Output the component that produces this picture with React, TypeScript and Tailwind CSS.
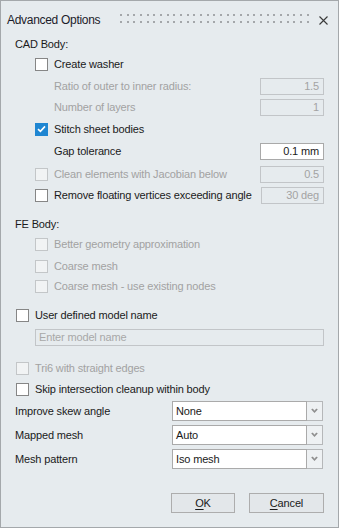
import React from "react";

type CS = "off" | "on" | "dis";

function Check({ state }: { state: CS }) {
  if (state === "on") {
    return (
      <div className="w-[13px] h-[13px] shrink-0 bg-[#1f86d2] border border-[#1f86d2] flex items-center justify-center">
        <svg width="9" height="8" viewBox="0 0 9 8">
          <path d="M1 4.2 L3.4 6.4 L8 1.4" fill="none" stroke="#ffffff" strokeWidth="1.6" />
        </svg>
      </div>
    );
  }
  if (state === "dis") {
    return <div className="w-[13px] h-[13px] shrink-0 bg-[#f1f3f4] border border-[#c3c6c8]" />;
  }
  return <div className="w-[13px] h-[13px] shrink-0 bg-white border border-[#868686]" />;
}

function NumBox({ value, enabled, w }: { value: string; enabled?: boolean; w?: string }) {
  return (
    <div
      className={
        "ml-auto h-[17px] flex items-center justify-end pr-[4px] border " +
        (w ?? "w-[64px]") +
        " " +
        (enabled
          ? "bg-white border-[#a9a9a9] text-[#1a1a1a]"
          : "bg-[#e6ebee] border-[#c2c5c8] text-[#a3a3a3]")
      }
    >
      {value}
    </div>
  );
}

function Dropdown({ value }: { value: string }) {
  return (
    <div className="flex h-[20px]">
      <div className="w-[135px] h-[20px] bg-white border border-[#aaaaaa] flex items-center pl-[3px] text-[#1a1a1a]">
        {value}
      </div>
      <div className="w-[16px] h-[20px] bg-[#eef1f3] border border-l-0 border-[#b5b7b9] flex items-center justify-center">
        <svg width="7" height="6" viewBox="0 0 7 6">
          <path d="M0.8 1 L3.5 3.8 L6.2 1" fill="none" stroke="#8d8d8d" strokeWidth="1.5" />
          <path d="M2 1.2 L3.5 2.6 L5 1.2" fill="none" stroke="#b0b0b0" strokeWidth="0.8" />
        </svg>
      </div>
    </div>
  );
}

export default function App() {
  const dots: React.ReactNode[] = [];
  for (let i = 0; i < 29; i++) {
    const x = Math.round(i * 6.67);
    dots.push(<rect key={"a" + i} x={x} y={4} width={2} height={2} fill="#a4a7aa" />);
    dots.push(<rect key={"b" + i} x={x} y={11} width={2} height={2} fill="#a4a7aa" />);
  }
  const dis = "text-[#a2a2a2]";
  return (
    <div
      className="w-[339px] h-[528px] bg-[#e6ebee] border border-[#a4a8ab] flex flex-col text-[11px] tracking-[-0.15px] text-[#1a1a1a] overflow-hidden"
      style={{ fontFamily: '"Liberation Sans", Arial, sans-serif' }}
    >
      {/* Title */}
      <div className="flex items-center h-[20px] mt-[9px] pl-[6px] pr-[10px]">
        <div className="w-[113px] text-[12px] tracking-[-0.3px] text-[#1c1c2a]">Advanced Options</div>
        <svg width="190" height="20" viewBox="0 0 190 20">
          {dots}
        </svg>
        <svg className="ml-auto" width="9" height="9" viewBox="0 0 9 9">
          <path d="M0.5 0.5 L8.5 8.5 M8.5 0.5 L0.5 8.5" stroke="#3a3a3a" strokeWidth="1.1" />
        </svg>
      </div>

      {/* CAD Body */}
      <div className="flex items-center h-[20px] mt-[4px] pl-[14px]">CAD Body:</div>
      <div className="flex items-center h-[20px] mt-0 pl-[34px] gap-[6px]">
        <Check state="off" />
        <span>Create washer</span>
      </div>
      <div className={"flex items-center h-[20px] mt-[2px] pl-[53px] pr-[14px] " + dis}>
        <span>Ratio of outer to inner radius:</span>
        <NumBox value="1.5" />
      </div>
      <div className={"flex items-center h-[20px] mt-[1px] pl-[53px] pr-[14px] " + dis}>
        <span>Number of layers</span>
        <NumBox value="1" />
      </div>
      <div className="flex items-center h-[20px] mt-[2px] pl-[34px] gap-[6px]">
        <Check state="on" />
        <span>Stitch sheet bodies</span>
      </div>
      <div className="flex items-center h-[20px] mt-[2px] pl-[53px] pr-[14px]">
        <span>Gap tolerance</span>
        <NumBox value="0.1 mm" enabled />
      </div>
      <div className="flex items-center h-[20px] mt-[3px] pl-[34px] pr-[14px]">
        <Check state="dis" />
        <span className={"ml-[6px] " + dis}>Clean elements with Jacobian below</span>
        <NumBox value="0.5" />
      </div>
      <div className="flex items-center h-[20px] mt-[1px] pl-[34px] pr-[14px]">
        <Check state="off" />
        <span className="ml-[6px]">Remove floating vertices exceeding angle</span>
        <NumBox value="30 deg" w="w-[63px]" />
      </div>

      {/* FE Body */}
      <div className="flex items-center h-[20px] mt-[9px] pl-[14px]">FE Body:</div>
      <div className="flex items-center h-[20px] mt-0 pl-[34px] gap-[6px]">
        <Check state="dis" />
        <span className={dis}>Better geometry approximation</span>
      </div>
      <div className="flex items-center h-[20px] mt-[2px] pl-[34px] gap-[6px]">
        <Check state="dis" />
        <span className={dis}>Coarse mesh</span>
      </div>
      <div className="flex items-center h-[20px] mt-0 pl-[34px] gap-[6px]">
        <Check state="dis" />
        <span className={dis}>Coarse mesh - use existing nodes</span>
      </div>

      {/* User defined */}
      <div className="flex items-center h-[20px] mt-[9px] pl-[15px] gap-[6px]">
        <Check state="off" />
        <span>User defined model name</span>
      </div>
      <div className="flex items-center h-[20px] mt-[2px] pl-[34px] pr-[14px]">
        <div className="w-full h-[17px] border border-[#c2c5c8] bg-[#e6ebee] flex items-center pl-[3px] text-[#a8a8a8]">
          Enter model name
        </div>
      </div>

      <div className="flex items-center h-[20px] mt-[11px] pl-[15px] gap-[6px]">
        <Check state="dis" />
        <span className={dis}>Tri6 with straight edges</span>
      </div>
      <div className="flex items-center h-[20px] mt-[1px] pl-[15px] gap-[6px]">
        <Check state="off" />
        <span>Skip intersection cleanup within body</span>
      </div>

      {/* Dropdowns */}
      <div className="flex items-center h-[20px] mt-[2px] pl-[14px]">
        <span className="w-[157px]">Improve skew angle</span>
        <Dropdown value="None" />
      </div>
      <div className="flex items-center h-[20px] mt-[4px] pl-[14px]">
        <span className="w-[157px]">Mapped mesh</span>
        <Dropdown value="Auto" />
      </div>
      <div className="flex items-center h-[20px] mt-[4px] pl-[14px]">
        <span className="w-[157px]">Mesh pattern</span>
        <Dropdown value="Iso mesh" />
      </div>

      {/* Buttons */}
      <div className="flex items-center justify-end h-[20px] mt-[24px] pr-[14px] gap-[14px]">
        <div className="w-[64px] h-[20px] border border-[#adadad] bg-[#e3e7ea] flex items-center justify-center">
          <span>
            <span className="underline underline-offset-2">O</span>K
          </span>
        </div>
        <div className="w-[75px] h-[20px] border border-[#adadad] bg-[#e3e7ea] flex items-center justify-center">
          <span>
            <span className="underline underline-offset-2">C</span>ancel
          </span>
        </div>
      </div>
    </div>
  );
}
